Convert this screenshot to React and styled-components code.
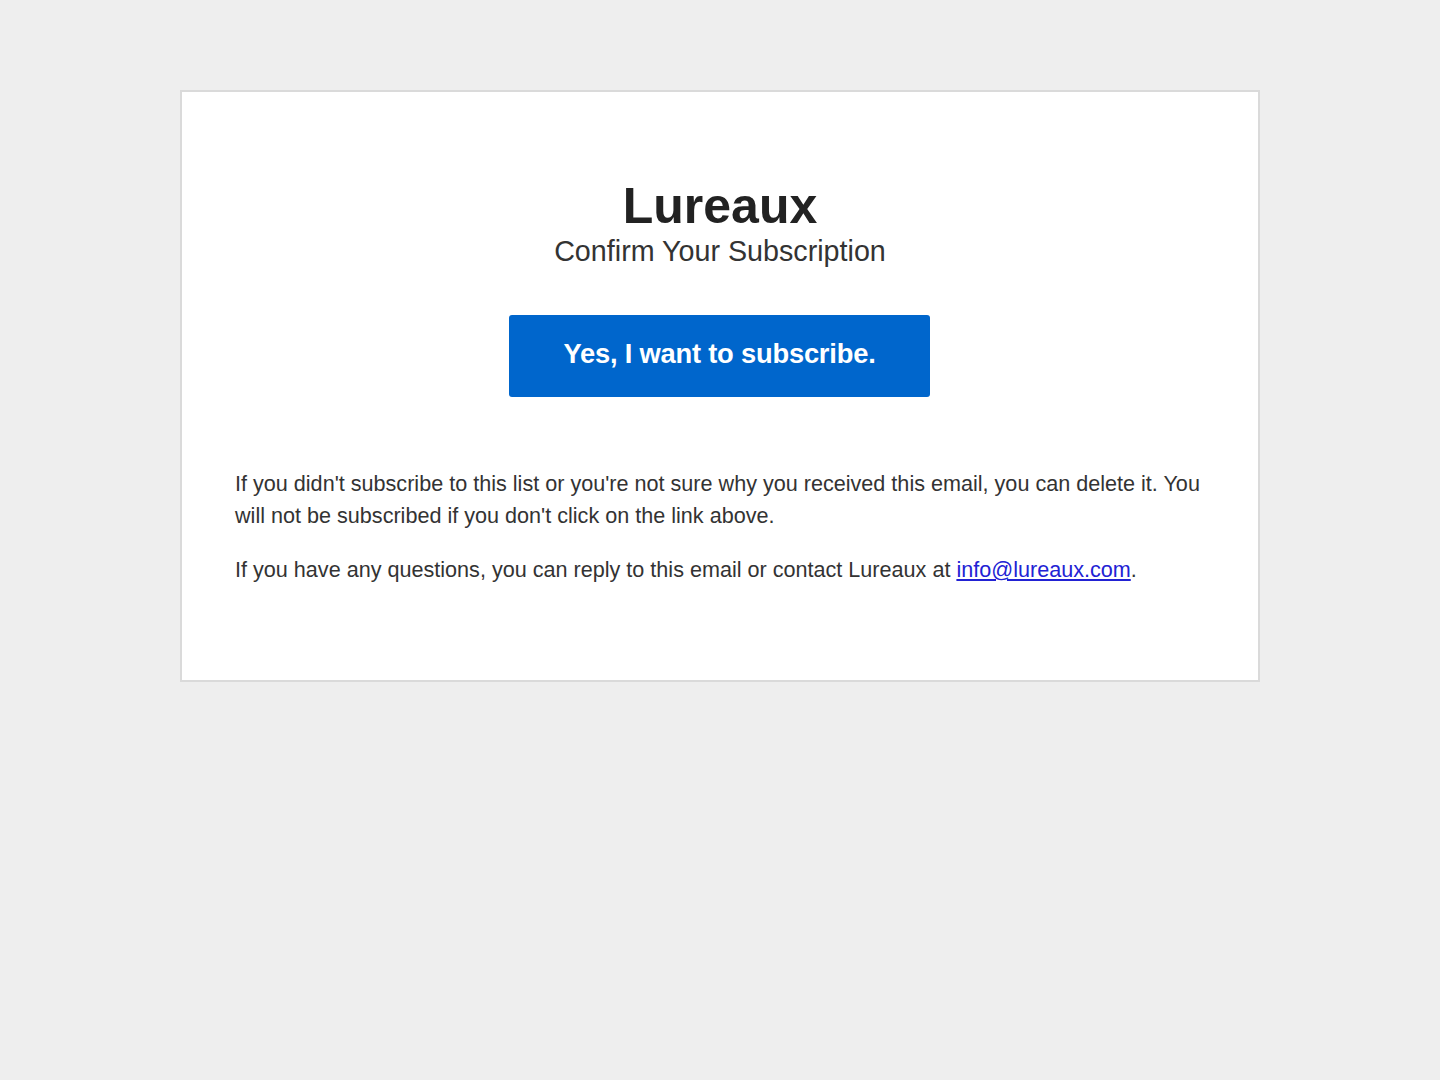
import React from "react";
import styled, { createGlobalStyle } from "styled-components";

const Global = createGlobalStyle`
  html, body { margin: 0; padding: 0; background: #eeeeee; }
  body { font-family: "Liberation Sans", Arial, sans-serif; }
`;

const Page = styled.div`
  min-height: 1080px;
  padding-top: 90px;
  box-sizing: border-box;
`;

const Card = styled.div`
  width: 1080px;
  margin: 0 auto;
  box-sizing: border-box;
  background: #ffffff;
  border: 2px solid #dadada;
  padding: 89px 53px 94px 53px;
  display: flex;
  flex-direction: column;
`;

const Header = styled.div`
  display: flex;
  flex-direction: column;
  align-items: center;
  text-align: center;
`;

const Brand = styled.h1`
  margin: 0;
  font-size: 50px;
  line-height: 50px;
  font-weight: 700;
  color: #222222;
`;

const Subtitle = styled.h2`
  margin: 4px 0 0;
  font-size: 28.7px;
  line-height: 32px;
  font-weight: 400;
  color: #333333;
`;

const ButtonRow = styled.div`
  display: flex;
  justify-content: center;
  margin-top: 48px;
  padding-right: 1px;
`;

const Button = styled.a`
  display: flex;
  align-items: center;
  justify-content: center;
  width: 421px;
  height: 82px;
  box-sizing: border-box;
  padding-bottom: 4px;
  background: #0066cc;
  border-radius: 3px;
  color: #ffffff;
  font-size: 27.3px;
  font-weight: 700;
  letter-spacing: -0.2px;
  text-decoration: none;
`;

const Body = styled.div`
  margin-top: 71px;
  display: flex;
  flex-direction: column;
  gap: 22px;
`;

const Para = styled.p`
  margin: 0;
  font-size: 21.6px;
  line-height: 32px;
  color: #333333;
`;

const Link = styled.a`
  color: #2222d4;
  text-decoration: underline;
`;

export default function App() {
  return (
    <>
      <Global />
      <Page>
        <Card>
          <Header>
            <Brand>Lureaux</Brand>
            <Subtitle>Confirm Your Subscription</Subtitle>
          </Header>
          <ButtonRow>
            <Button href="#">Yes, I want to subscribe.</Button>
          </ButtonRow>
          <Body>
            <Para>
              If you didn't subscribe to this list or you're not sure why you received this email, you can delete it. You will not be subscribed if you don't click on the link above.
            </Para>
            <Para>
              If you have any questions, you can reply to this email or contact Lureaux at{" "}
              <Link href="#">info@lureaux.com</Link>.
            </Para>
          </Body>
        </Card>
      </Page>
    </>
  );
}
